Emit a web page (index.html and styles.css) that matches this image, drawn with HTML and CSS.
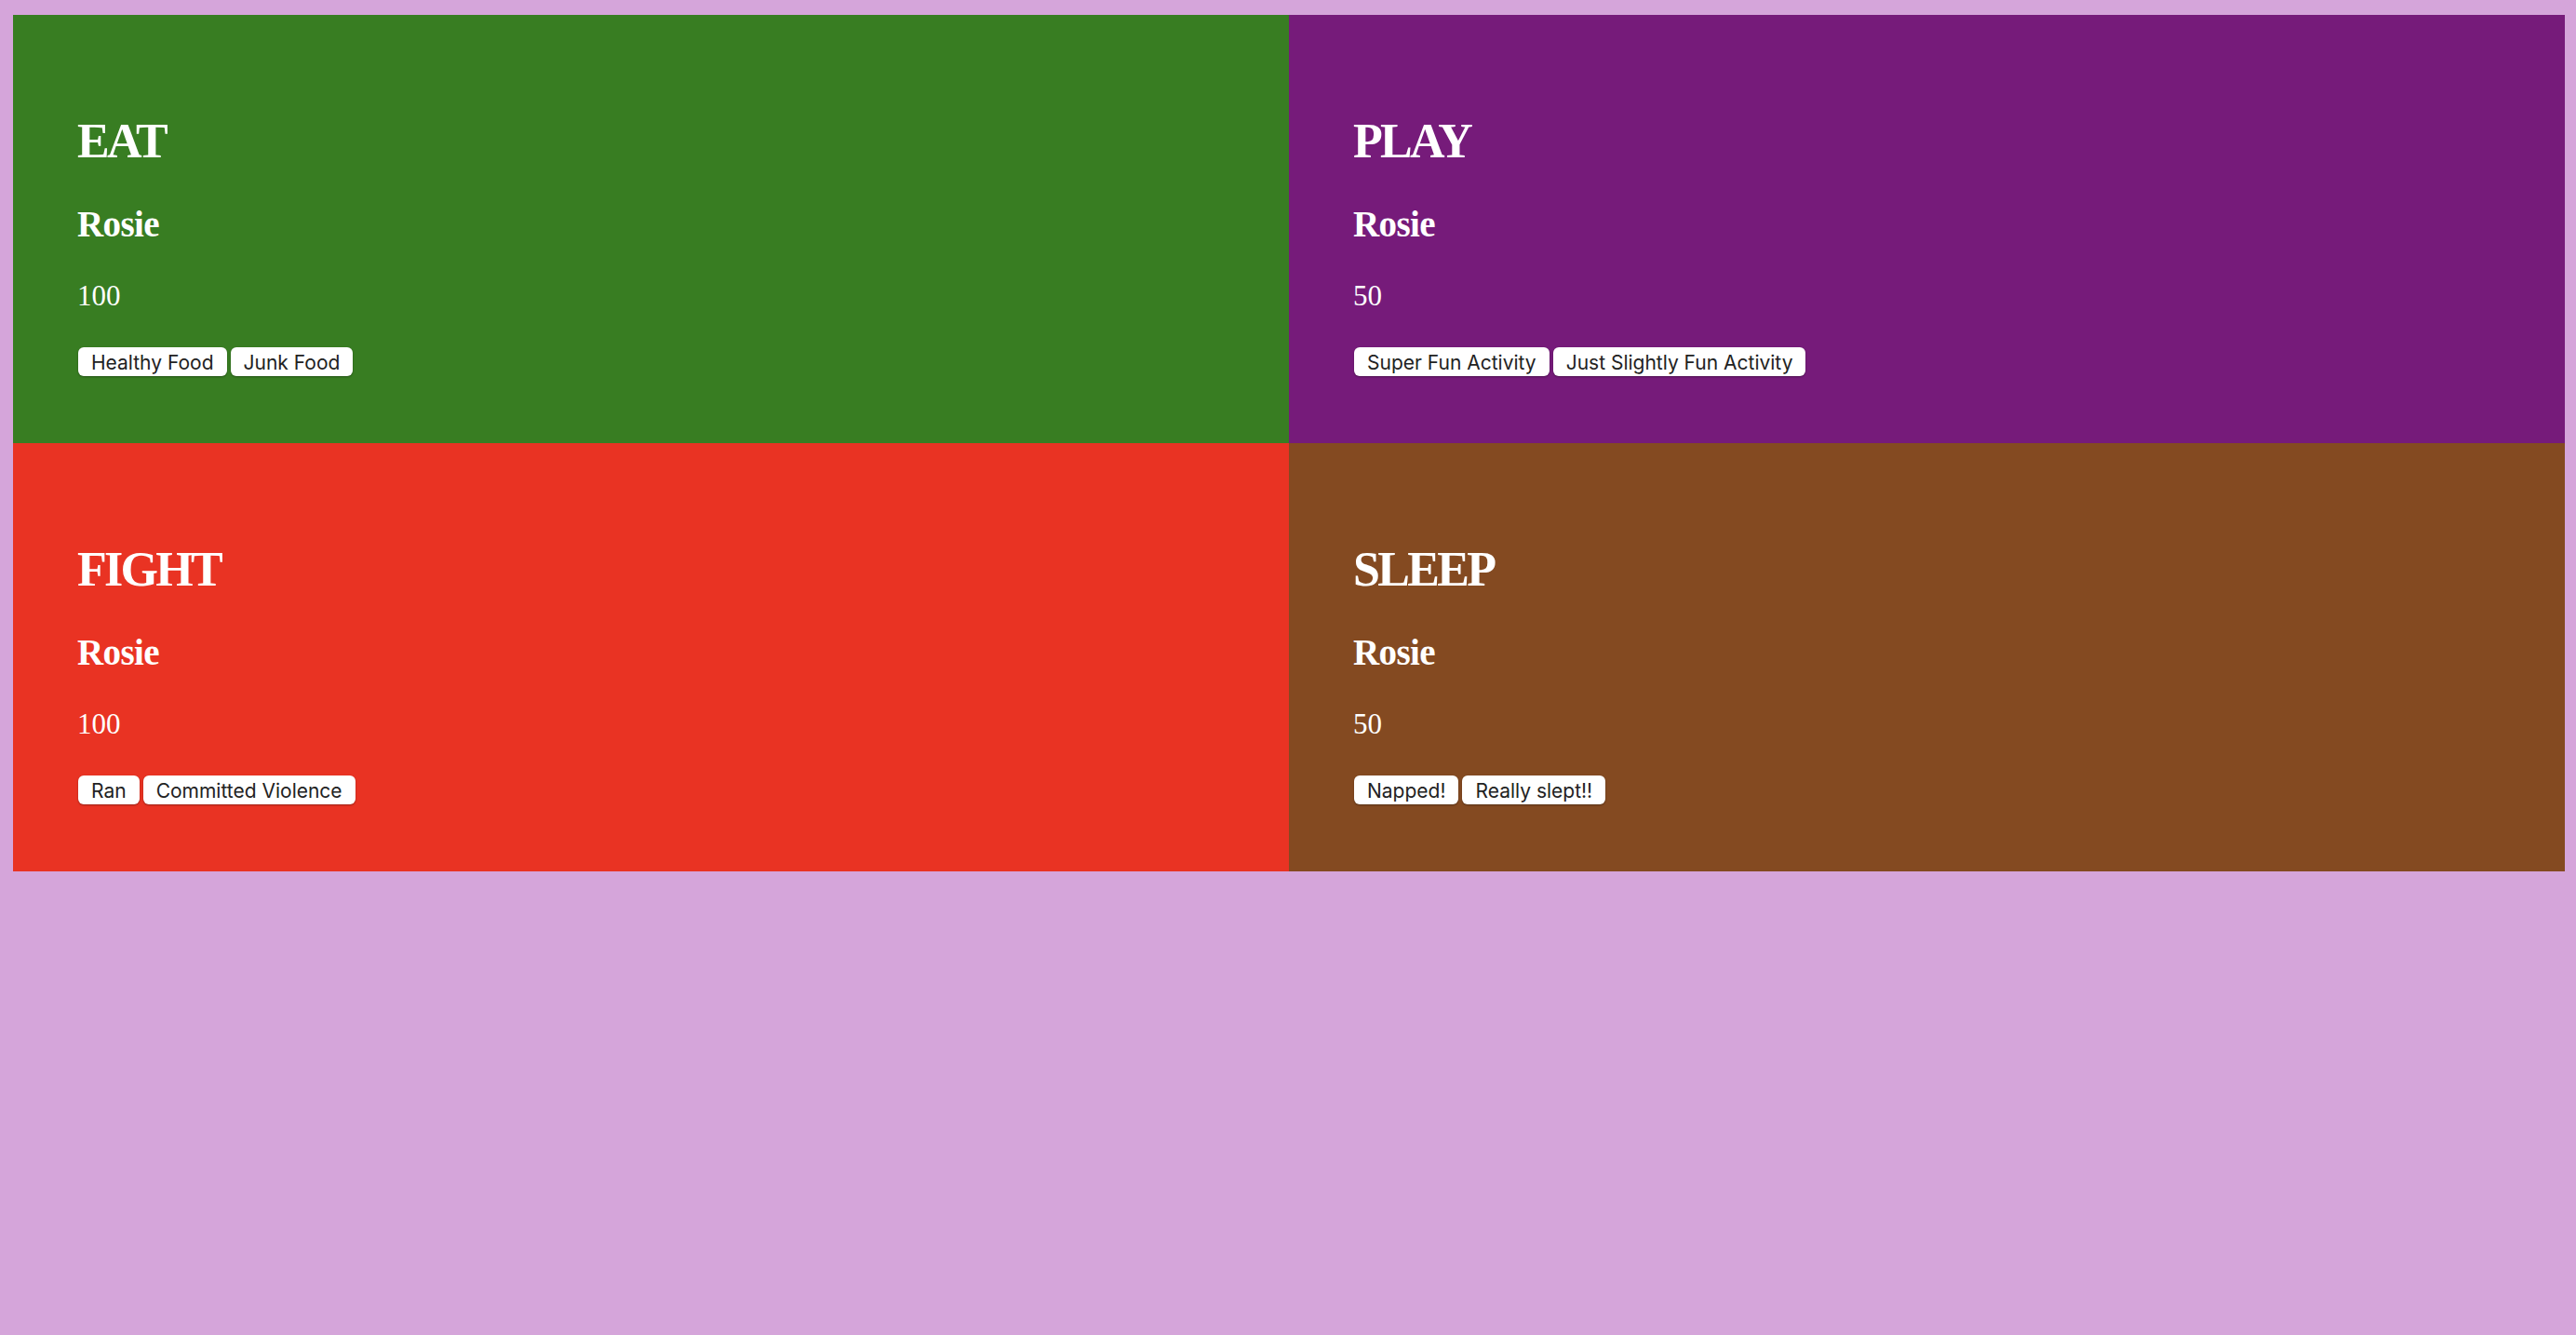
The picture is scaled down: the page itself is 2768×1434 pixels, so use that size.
FILE: index.html
```html
<!DOCTYPE html>
<html lang="en">
<head>
<meta charset="utf-8">
<title>Rosie</title>
<link rel="stylesheet" href="styles.css">
</head>
<body>
<div class="board">
  <section class="panel eat">
    <h1 class="title">EAT</h1>
    <h2 class="name">Rosie</h2>
    <p class="score">100</p>
    <div class="actions">
      <button class="btn">Healthy Food</button>
      <button class="btn">Junk Food</button>
    </div>
  </section>
  <section class="panel play">
    <h1 class="title">PLAY</h1>
    <h2 class="name">Rosie</h2>
    <p class="score">50</p>
    <div class="actions">
      <button class="btn">Super Fun Activity</button>
      <button class="btn">Just Slightly Fun Activity</button>
    </div>
  </section>
  <section class="panel fight">
    <h1 class="title">FIGHT</h1>
    <h2 class="name">Rosie</h2>
    <p class="score">100</p>
    <div class="actions">
      <button class="btn">Ran</button>
      <button class="btn">Committed Violence</button>
    </div>
  </section>
  <section class="panel sleep">
    <h1 class="title">SLEEP</h1>
    <h2 class="name">Rosie</h2>
    <p class="score">50</p>
    <div class="actions">
      <button class="btn">Napped!</button>
      <button class="btn">Really slept!!</button>
    </div>
  </section>
</div>
</body>
</html>
```

FILE: styles.css
```css
html, body {
  background: #d5a5da;
}
body {
  margin: 16px 12px 0 14px;
  font-family: "Liberation Serif", "Times New Roman", serif;
  color: #ffffff;
}
.board {
  display: grid;
  grid-template-columns: 1fr 1fr;
  grid-template-rows: 460px 460px;
}
.panel {
  display: flex;
  flex-direction: column;
  align-items: flex-start;
  padding: 106px 0 0 69px;
  box-sizing: border-box;
}
.eat { background: #387d22; }
.play { background: #761b7a; }
.fight { background: #e93323; }
.sleep { background: #844a21; }
.title {
  margin: 0;
  font-size: 52px;
  line-height: 60px;
  font-weight: bold;
  letter-spacing: -2.7px;
}
.name {
  margin: 36px 0 0;
  font-size: 39px;
  line-height: 45px;
  font-weight: bold;
  letter-spacing: -0.6px;
}
.score {
  margin: 37px 0 0;
  font-size: 31px;
  line-height: 36px;
  font-weight: normal;
}
.actions {
  display: flex;
  gap: 4px;
  margin: 37px 0 0 1px;
}
.btn {
  height: 31px;
  padding: 2px 14px 0;
  box-sizing: border-box;
  border: none;
  border-radius: 6px;
  background: #ffffff;
  color: #222222;
  font-family: Inter, "Noto Sans", sans-serif;
  font-size: 21px;
  line-height: 27px;
  box-shadow: 0 1px 2px rgba(0, 0, 0, 0.35);
}
```
